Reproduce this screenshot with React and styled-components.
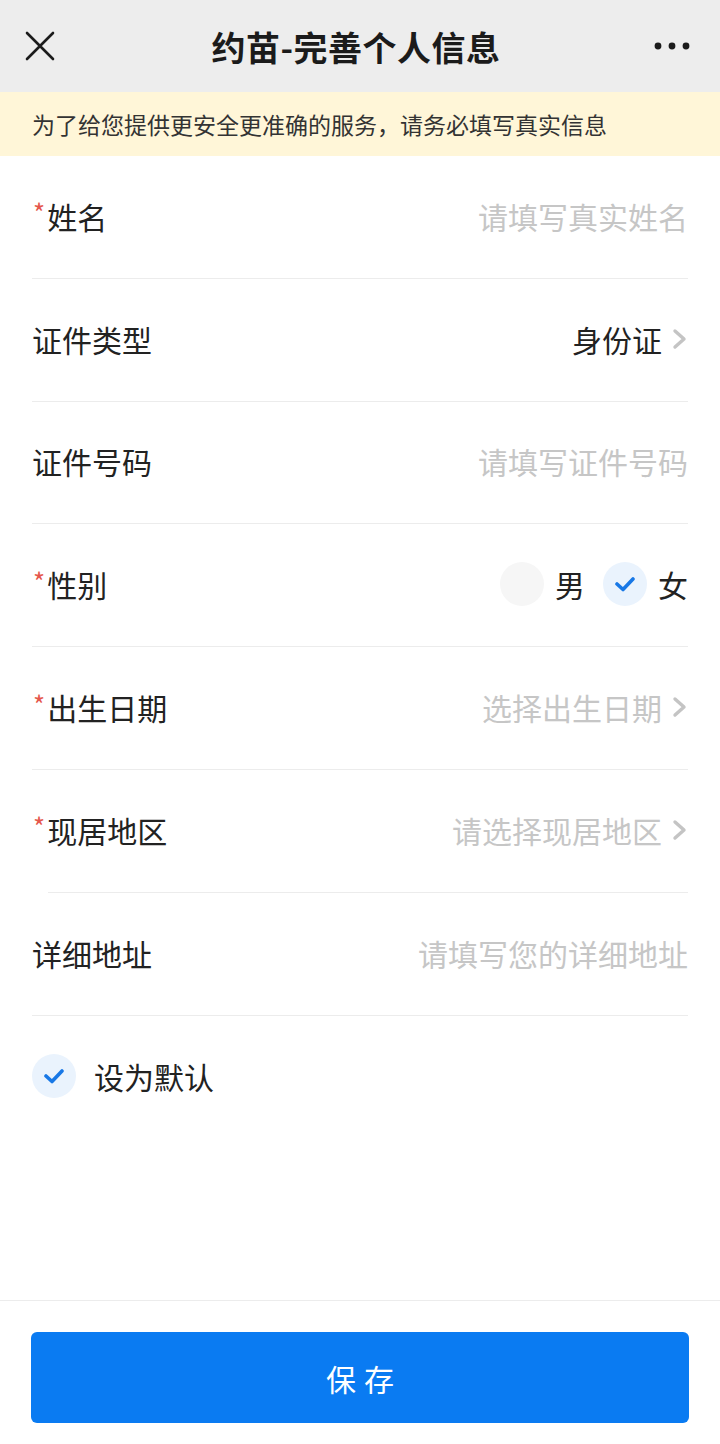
import React from 'react';
import styled, { createGlobalStyle } from 'styled-components';

const GlobalStyle = createGlobalStyle`
  html, body {
    margin: 0;
    padding: 0;
    background: #fff;
    font-family: "Noto Sans CJK SC", "Noto Sans", sans-serif;
  }
  * { box-sizing: border-box; }
`;

const Page = styled.div`
  width: 720px;
  min-height: 1444px;
  display: flex;
  flex-direction: column;
  background: #fff;
`;

const Header = styled.header`
  height: 92px;
  background: #ededed;
  display: flex;
  align-items: center;
  justify-content: space-between;
  padding: 0 30px 0 22px;
`;

const Title = styled.h1`
  margin: 0;
  font-size: 34px;
  font-weight: 700;
  color: #1b1b1b;
  letter-spacing: 0.5px;
`;

const IconButton = styled.div`
  width: 36px;
  height: 36px;
  display: flex;
  align-items: center;
  justify-content: center;
`;

const Notice = styled.div`
  height: 64px;
  background: #fff6d8;
  display: flex;
  align-items: center;
  padding: 0 32px;
  font-size: 23px;
  color: #333;
`;

const Form = styled.div`
  display: flex;
  flex-direction: column;
`;

const Row = styled.div`
  height: 122.8px;
  margin-left: ${({ indent }) => (indent ? '48px' : '32px')};
  margin-right: 32px;
  display: flex;
  align-items: center;
  justify-content: space-between;
  border-bottom: 1px solid #ececec;
  padding-bottom: 2px;
  & > span:first-child {
    margin-left: ${({ indent }) => (indent ? '-16px' : '0')};
  }
`;

const Label = styled.span`
  font-size: 30px;
  color: #222;
  display: flex;
  align-items: center;
`;

const Star = styled.i`
  font-style: normal;
  color: #e5574b;
  font-size: 26px;
  margin-left: 1px;
  margin-right: 2px;
  position: relative;
  top: -4px;
`;

const Value = styled.span`
  display: flex;
  align-items: center;
  gap: 10px;
  font-size: 30px;
  color: ${({ placeholder }) => (placeholder ? '#c6c6c6' : '#222')};
`;

const Chevron = () => (
  <svg width="16" height="24" viewBox="0 0 16 24">
    <path d="M3 4 L12 12 L3 20" fill="none" stroke="#c4c4c4" strokeWidth="3.4" strokeLinecap="round" strokeLinejoin="round" />
  </svg>
);

const Options = styled.div`
  display: flex;
  align-items: center;
`;

const Option = styled.label`
  display: flex;
  align-items: center;
  gap: 11px;
  margin-left: 18px;
  font-size: 30px;
  color: #222;
`;

const Circle = styled.span`
  width: 44px;
  height: 44px;
  border-radius: 50%;
  background: ${({ checked }) => (checked ? '#eaf3fd' : '#f6f6f6')};
  display: flex;
  align-items: center;
  justify-content: center;
`;

const Check = () => (
  <svg width="22" height="16" viewBox="0 0 22 16">
    <path d="M3 8 L9 13.5 L19 3" fill="none" stroke="#1878e6" strokeWidth="3.6" strokeLinecap="round" strokeLinejoin="round" />
  </svg>
);

const DefaultRow = styled.div`
  height: 122px;
  display: flex;
  align-items: center;
  gap: 18px;
  padding-left: 32px;
  padding-bottom: 2px;
  font-size: 30px;
  color: #222;
`;

const Spacer = styled.div`
  flex: 1;
`;

const Footer = styled.footer`
  border-top: 1px solid #ececec;
  padding: 31px 31px 21px;
`;

const SaveButton = styled.button`
  width: 100%;
  height: 91px;
  border: none;
  border-radius: 6px;
  background: #0a7bf2;
  color: #fff;
  font-family: inherit;
  font-size: 30px;
  letter-spacing: 8px;
  text-indent: 8px;
`;

const fields = [
  { label: '姓名', required: true, value: '请填写真实姓名', placeholder: true },
  { label: '证件类型', value: '身份证', arrow: true },
  { label: '证件号码', value: '请填写证件号码', placeholder: true },
  { label: '性别', required: true, gender: true },
  { label: '出生日期', required: true, value: '选择出生日期', placeholder: true, arrow: true },
  { label: '现居地区', required: true, value: '请选择现居地区', placeholder: true, arrow: true, indent: true },
  { label: '详细地址', value: '请填写您的详细地址', placeholder: true },
];

const App = () => {
  return (
    <Page>
      <GlobalStyle />
      <Header>
        <IconButton>
          <svg width="32" height="32" viewBox="0 0 32 32">
            <path d="M3 3 L29 29 M29 3 L3 29" stroke="#1b1b1b" strokeWidth="2.6" strokeLinecap="round" />
          </svg>
        </IconButton>
        <Title>约苗-完善个人信息</Title>
        <IconButton>
          <svg width="36" height="10" viewBox="0 0 36 10">
            <circle cx="4" cy="5" r="3.4" fill="#1b1b1b" />
            <circle cx="18" cy="5" r="3.4" fill="#1b1b1b" />
            <circle cx="32" cy="5" r="3.4" fill="#1b1b1b" />
          </svg>
        </IconButton>
      </Header>
      <Notice>为了给您提供更安全更准确的服务，请务必填写真实信息</Notice>
      <Form>
        {fields.map((f) => (
          <Row key={f.label} indent={f.indent}>
            <Label>
              {f.required && <Star>*</Star>}
              {f.label}
            </Label>
            {f.gender ? (
              <Options>
                <Option>
                  <Circle />
                  男
                </Option>
                <Option>
                  <Circle checked>
                    <Check />
                  </Circle>
                  女
                </Option>
              </Options>
            ) : (
              <Value placeholder={f.placeholder ? 1 : 0}>
                {f.value}
                {f.arrow && <Chevron />}
              </Value>
            )}
          </Row>
        ))}
        <DefaultRow>
          <Circle checked>
            <Check />
          </Circle>
          设为默认
        </DefaultRow>
      </Form>
      <Spacer />
      <Footer>
        <SaveButton>保存</SaveButton>
      </Footer>
    </Page>
  );
};

export default App;
